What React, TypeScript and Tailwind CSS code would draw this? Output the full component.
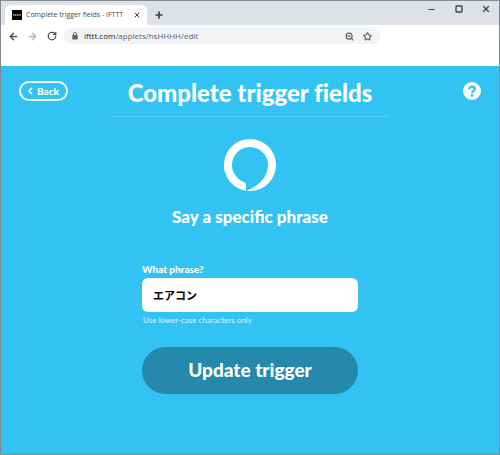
import type { ReactNode } from "react";
import { ArrowLeft, ArrowRight, Minus, Plus, RotateCw, Square, Star, X, ZoomOut } from "lucide-react";

function IconButton({
  label,
  className = "",
  children,
}: {
  label: string;
  className?: string;
  children: ReactNode;
}) {
  return (
    <button
      type="button"
      aria-label={label}
      className={`flex items-center justify-center shrink-0 ${className}`}
    >
      {children}
    </button>
  );
}

function TabStrip() {
  return (
    <div className="flex h-6 items-end bg-[#dee1e6] pl-1">
      <div className="flex h-5 w-[142px] items-center rounded-t-md bg-white pr-1 pl-[7px]">
        <span className="flex size-[10px] shrink-0 items-center justify-center bg-black">
          <svg aria-hidden="true" viewBox="0 0 10 10" className="size-[10px]">
            <path d="M1 5h8" stroke="#aaa" strokeWidth="1.5" strokeDasharray="1.4 .4" />
          </svg>
        </span>
        <span className="ml-1 min-w-0 flex-1 whitespace-nowrap text-[7px] text-[#45484c]">
          Complete trigger fields - IFTTT
        </span>
        <IconButton label="Close tab" className="size-3 text-[#3c4043]">
          <X size={8} strokeWidth={3} />
        </IconButton>
      </div>
      <IconButton label="New tab" className="ml-[2px] size-5 text-[#3c4043]">
        <Plus size={10} strokeWidth={4} />
      </IconButton>
      <div className="ml-auto flex h-full items-start pt-[2px] text-[#444]">
        <IconButton label="Minimize" className="h-3 w-[27px]">
          <Minus size={9} strokeWidth={3} />
        </IconButton>
        <IconButton label="Maximize" className="h-3 w-[27px]">
          <Square size={8} strokeWidth={4} strokeLinejoin="miter" />
        </IconButton>
        <IconButton label="Close" className="h-3 w-[27px]">
          <X size={10} strokeWidth={3} />
        </IconButton>
      </div>
    </div>
  );
}

function Toolbar() {
  return (
    <div className="flex h-[41px] items-start bg-white pt-[3px] pl-[3px]">
      <div className="flex h-4 items-center text-[#4a4d51]">
        <IconButton label="Go back" className="w-[19px]">
          <ArrowLeft size={11} strokeWidth={3} />
        </IconButton>
        <IconButton label="Go forward" className="w-[19px] text-[#b5b7ba]">
          <ArrowRight size={11} strokeWidth={3} />
        </IconButton>
        <IconButton label="Reload" className="w-[19px]">
          <RotateCw size={10} strokeWidth={3} />
        </IconButton>
      </div>
      <div className="mr-[119px] ml-[3px] flex h-4 flex-1 items-center rounded-full bg-[#f1f3f4] pr-1 pl-[7px] text-[#5f6368]">
        <svg aria-hidden="true" viewBox="0 0 8 8" className="size-2 shrink-0">
          <rect x="1.3" y="3" width="5.4" height="4.4" rx=".6" fill="currentColor" />
          <path d="M2.5 3.2V2a1.5 1.5 0 0 1 3 0v1.2" fill="none" stroke="currentColor" strokeWidth=".9" />
        </svg>
        <p className="ml-1 flex-1 pl-px text-[8px] whitespace-nowrap">
          <span className="text-[#202124]">ifttt.com</span>/applets/hsHHHH/edit
        </p>
        <IconButton label="Zoom" className="w-[18px]">
          <ZoomOut size={9} strokeWidth={3} />
        </IconButton>
        <IconButton label="Bookmark this page" className="w-[18px]">
          <Star size={9} strokeWidth={3} />
        </IconButton>
      </div>
    </div>
  );
}

function AlexaLogo() {
  return (
    <svg aria-hidden="true" viewBox="0 0 52 52" className="mx-auto size-[52px]">
      <path
        fill="#fff"
        d="M26 0a26 26 0 0 0-4 51.7v-5.8c0-1.4-.9-2.4-2.2-2.9A18 18 0 1 1 44 26C44 38 34 48 22.4 51.7c1.2.2 2.4.3 3.6.3a26 26 0 0 0 0-52Z"
      />
    </svg>
  );
}

export default function App() {
  return (
    <div className="flex min-h-screen flex-col border border-[#7f8a92] font-['Open_Sans',sans-serif]">
      <TabStrip />
      <Toolbar />
      <main className="flex-1 bg-[#33c3f3] font-['Lato','Noto_Sans_CJK_JP',sans-serif] text-white">
        <header className="flex items-start justify-between px-[18px]">
          <div className="w-[93px] pt-[15px]">
            <button
              type="button"
              className="flex h-5 w-[49px] items-center justify-center gap-1 rounded-full border-2 border-white/90 text-[10px] font-black"
            >
              <svg aria-hidden="true" viewBox="0 0 5 8" className="h-2 w-[5px]">
                <path d="M4 1 1 4l3 3" fill="none" stroke="currentColor" strokeWidth="1.6" />
              </svg>
              Back
            </button>
          </div>
          <h1 className="flex-1 border-b border-white/15 pt-3 pb-2 text-center text-[24px] leading-[30px] font-black whitespace-nowrap [font-variant-ligatures:none]">
            Complete trigger fields
          </h1>
          <div className="flex w-[93px] justify-end pt-4">
            <button
              type="button"
              aria-label="Help"
              className="flex size-[18px] items-center justify-center rounded-full bg-white text-[#33c3f3]"
            >
              <svg aria-hidden="true" viewBox="0 0 18 18" className="size-[18px]">
                <path
                  d="M6.2 7.2C6.2 5.6 7.4 4.7 9 4.7s2.8.9 2.8 2.3c0 1.9-2.6 1.9-2.6 4"
                  fill="none"
                  stroke="currentColor"
                  strokeWidth="2.2"
                />
                <circle cx="9.1" cy="13.4" r="1.4" fill="currentColor" />
              </svg>
            </button>
          </div>
        </header>

        <section className="pt-[22px] text-center">
          <AlexaLogo />
          <h2 className="pt-[14px] text-[17px] leading-6 font-black">
            Say a specific phrase
          </h2>
        </section>

        <form className="mx-auto w-[216px] pt-[33px]">
          <label htmlFor="phrase" className="block text-[10px] leading-[14px] font-black">
            What phrase?
          </label>
          <input
            id="phrase"
            type="text"
            defaultValue="エアコン"
            aria-describedby="phrase-hint"
            className="mt-[2px] block h-[34px] w-full rounded-md bg-white px-[11px] text-[11px] font-bold text-black outline-none"
          />
          <p id="phrase-hint" className="pt-[2px] pl-px text-[8px] leading-3 text-white/80">
            Use lower-case characters only
          </p>
          <button
            type="button"
            className="mt-[21px] h-[47px] w-full rounded-full bg-[#2489ab] text-[19px] font-black"
          >
            Update trigger
          </button>
        </form>
      </main>
    </div>
  );
}
